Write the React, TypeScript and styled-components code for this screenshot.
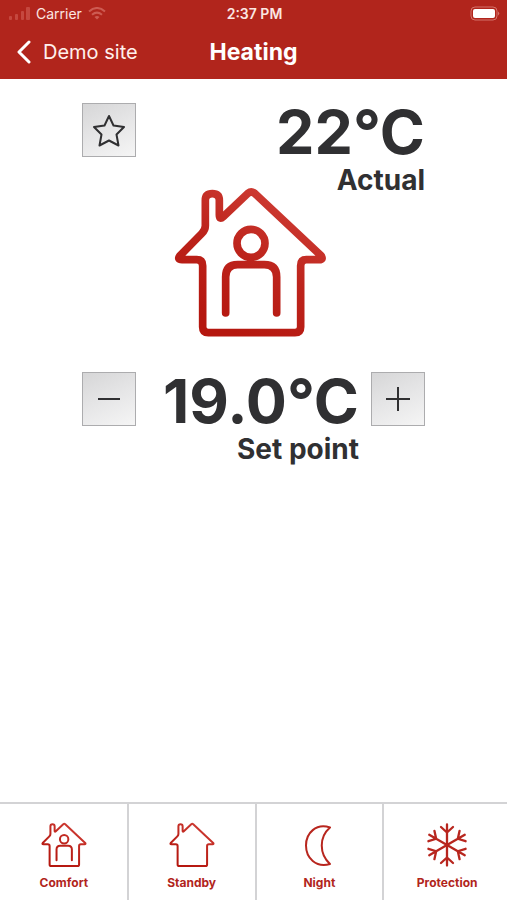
import React from "react";
import styled, { createGlobalStyle } from "styled-components";

const GlobalStyle = createGlobalStyle`
  *, *::before, *::after { box-sizing: border-box; }
  body {
    margin: 0;
    background: #fff;
    color: #303032;
    font-family: Inter, "Liberation Sans", sans-serif;
  }
  button { font: inherit; color: inherit; cursor: pointer; }
`;

const Screen = styled.div`
  display: flex;
  flex-direction: column;
  min-height: 100vh;
`;

const Header = styled.header`
  background: #b1251c;
  color: #fff;
`;

const StatusBar = styled.div`
  display: grid;
  grid-template-columns: 1fr auto 1fr;
  align-items: center;
  height: 27px;
  padding: 0 7px 0 9px;
  font-size: 14px;
  line-height: 16px;
  color: #fbe6e2;
`;

const StatusGroup = styled.div<{ $end?: boolean }>`
  display: flex;
  align-items: center;
  justify-content: ${(p) => (p.$end ? "flex-end" : "flex-start")};
  gap: 6px;
`;

const Clock = styled.time`
  font-weight: 600;
`;

const NavBar = styled.div`
  display: grid;
  grid-template-columns: 1fr auto 1fr;
  align-items: center;
  height: 52px;
  padding: 0 16px 2px;
`;

const BackLink = styled.a`
  display: flex;
  align-items: center;
  gap: 11px;
  color: #fff0ec;
  font-size: 20px;
  line-height: 28px;
  text-decoration: none;
`;

const Title = styled.h1`
  margin: 0;
  font-size: 23px;
  line-height: 28px;
  font-weight: 700;
`;

const Main = styled.main`
  flex: 1;
  display: flex;
  flex-direction: column;
  width: 100%;
  max-width: 375px;
  margin: 0 auto;
  padding: 24px 16px;
`;

const ControlRow = styled.section`
  display: flex;
  align-items: flex-start;
  gap: 12px;
`;

const SquareButton = styled.button`
  display: grid;
  place-items: center;
  flex: none;
  width: 54px;
  height: 54px;
  padding: 0;
  border: 1px solid #acacae;
  background: linear-gradient(155deg, #d6d6d7 0%, #e6e6e7 50%, #f5f5f5 100%);
`;

const Reading = styled.div`
  flex: 1;
  text-align: right;
`;

const Temperature = styled.div`
  font-size: 61px;
  line-height: 58px;
  font-weight: 700;
  white-space: nowrap;
`;

const Caption = styled.div`
  font-size: 28px;
  line-height: 38px;
  font-weight: 700;
`;

const Picture = styled.div`
  display: flex;
  justify-content: center;
  margin: -13px 0 33px;
  padding-right: 6px;
`;

const Tabs = styled.nav`
  display: grid;
  grid-template-columns: repeat(4, calc(25% + 1px));
  height: 98px;
  border-top: 2px solid #d3d3d5;
  overflow: hidden;
`;

const Tab = styled.button`
  display: flex;
  flex-direction: column;
  align-items: center;
  gap: 7px;
  padding: 18px 0 0;
  border: 0;
  background: #fff;
  color: #b1251c;
  font-size: 12px;
  line-height: 16px;
  font-weight: 700;
  box-shadow: inset 1px 0 #d3d3d5, inset -1px 0 #d3d3d5;
  &:first-child { box-shadow: inset -1px 0 #d3d3d5; }
  &:last-child { box-shadow: inset 1px 0 #d3d3d5; }
`;

function House({ id, size, stroke, person }: { id: string; size: number; stroke: number; person?: boolean }) {
  return (
    <svg width={size} height={size} viewBox="27 17 459 459" fill="none" aria-hidden="true">
      <defs>
        <linearGradient id={id} gradientUnits="userSpaceOnUse" x1="400" y1="60" x2="180" y2="440">
          <stop offset="0" stopColor="#cf3d35" />
          <stop offset="0.5" stopColor="#bd241c" />
          <stop offset="1" stopColor="#b5170f" />
        </linearGradient>
      </defs>
      <g stroke={`url(#${id})`} strokeWidth={stroke} strokeLinecap="round" strokeLinejoin="round">
        <path d="M121 60Q121 40 142 40Q163 40 163 60V104Q163 120 175 109L249 39Q259 31 269 39L468 226Q477 238 462 238H424Q407 238 407 256V440Q407 457 390 457H130Q113 457 113 440V256Q113 238 95 238H51Q36 238 44 227L110 160Q121 149 121 136Z" />
        {person && (
          <>
            <circle cx="258" cy="189" r="42" />
            <path d="M182 398V290Q182 253 218 253H298Q335 253 335 290V398" />
          </>
        )}
      </g>
    </svg>
  );
}

function Signal() {
  return (
    <svg width="21" height="13" viewBox="0 0 21 13" fill="#c5483f" aria-hidden="true">
      <rect x="0" y="9" width="3" height="4" rx="1" />
      <rect x="6" y="7" width="3" height="6" rx="1" />
      <rect x="12" y="4" width="3" height="9" rx="1" />
      <rect x="17" y="0" width="4" height="13" rx="1" />
    </svg>
  );
}

function Wifi() {
  return (
    <svg width="18" height="13" viewBox="0 0 18 13" fill="none" stroke="#cd5b52" strokeWidth="2" aria-hidden="true">
      <path d="M1 4.5Q9-2.5 17 4.5" />
      <path d="M4 7.8Q9 3.5 14 7.8" />
      <path d="M6.5 10L9 12.5L11.5 10Q9 8 6.5 10Z" fill="#cd5b52" stroke="none" />
    </svg>
  );
}

function Battery() {
  return (
    <svg width="30" height="15" viewBox="0 0 30 15" aria-hidden="true">
      <rect x="1" y="1" width="26" height="13" rx="4" fill="none" stroke="#d4736b" />
      <rect x="3" y="3" width="22" height="9" rx="2" fill="#fff" />
      <path d="M28 5.5Q30.5 7.5 28 9.5Z" fill="#d4736b" />
    </svg>
  );
}

function Moon() {
  return (
    <svg width="46" height="46" viewBox="0 0 46 46" fill="none" stroke="#b8261e" strokeWidth="2" strokeLinejoin="round" aria-hidden="true">
      <path d="M34 5.500C20 1 10 11 10 23.500C10 36 20 46 34 42C23 32 23 15 34 5.500Z" />
    </svg>
  );
}

function Snowflake() {
  return (
    <svg width="46" height="46" viewBox="-23 -23 46 46" fill="none" stroke="#b8261e" strokeWidth="2.300" strokeLinecap="round" aria-hidden="true">
      {[0, 60, 120, 180, 240, 300].map((angle) => (
        <path key={angle} transform={`rotate(${angle})`} d="M0 0V-20.500M-6-18L0-12.500L6-18" />
      ))}
    </svg>
  );
}

const modes = [
  { label: "Comfort", icon: <House id="comfort" size={46} stroke={20} person /> },
  { label: "Standby", icon: <House id="standby" size={46} stroke={20} /> },
  { label: "Night", icon: <Moon /> },
  { label: "Protection", icon: <Snowflake /> },
];

export default function App() {
  return (
    <Screen>
      <GlobalStyle />
      <Header>
        <StatusBar>
          <StatusGroup>
            <Signal />
            <span>Carrier</span>
            <Wifi />
          </StatusGroup>
          <Clock>2:37 PM</Clock>
          <StatusGroup $end>
            <Battery />
          </StatusGroup>
        </StatusBar>
        <NavBar>
          <BackLink href="#sites">
            <svg width="16" height="24" viewBox="0 0 16 24" fill="none" stroke="#fff" strokeWidth="3" strokeLinecap="round" strokeLinejoin="round" aria-hidden="true">
              <path d="M13 2L3 12L13 22" />
            </svg>
            Demo site
          </BackLink>
          <Title>Heating</Title>
        </NavBar>
      </Header>
      <Main>
        <ControlRow>
          <SquareButton aria-label="Favourite">
            <svg width="34" height="34" viewBox="0 0 34 34" fill="none" stroke="#303032" strokeWidth="2" strokeLinejoin="round" aria-hidden="true">
              <path d="M17 3L21.500 12.500L32 14L24.500 21.500L26.500 32.500L17 27.500L7.500 32.500L9.500 21.500L2 14L12.500 12.500Z" />
            </svg>
          </SquareButton>
          <Reading>
            <Temperature>22°C</Temperature>
            <Caption>Actual</Caption>
          </Reading>
        </ControlRow>
        <Picture>
          <House id="heating" size={153} stroke={23} person />
        </Picture>
        <ControlRow>
          <SquareButton aria-label="Decrease set point">
            <svg width="26" height="26" viewBox="0 0 26 26" stroke="#303032" strokeWidth="2" aria-hidden="true">
              <path d="M2 13H24" />
            </svg>
          </SquareButton>
          <Reading>
            <Temperature>19.0°C</Temperature>
            <Caption>Set point</Caption>
          </Reading>
          <SquareButton aria-label="Increase set point">
            <svg width="26" height="26" viewBox="0 0 26 26" stroke="#303032" strokeWidth="2" aria-hidden="true">
              <path d="M1 13H25M13 1V25" />
            </svg>
          </SquareButton>
        </ControlRow>
      </Main>
      <Tabs aria-label="Heating mode">
        {modes.map((mode) => (
          <Tab key={mode.label}>
            {mode.icon}
            {mode.label}
          </Tab>
        ))}
      </Tabs>
    </Screen>
  );
}
